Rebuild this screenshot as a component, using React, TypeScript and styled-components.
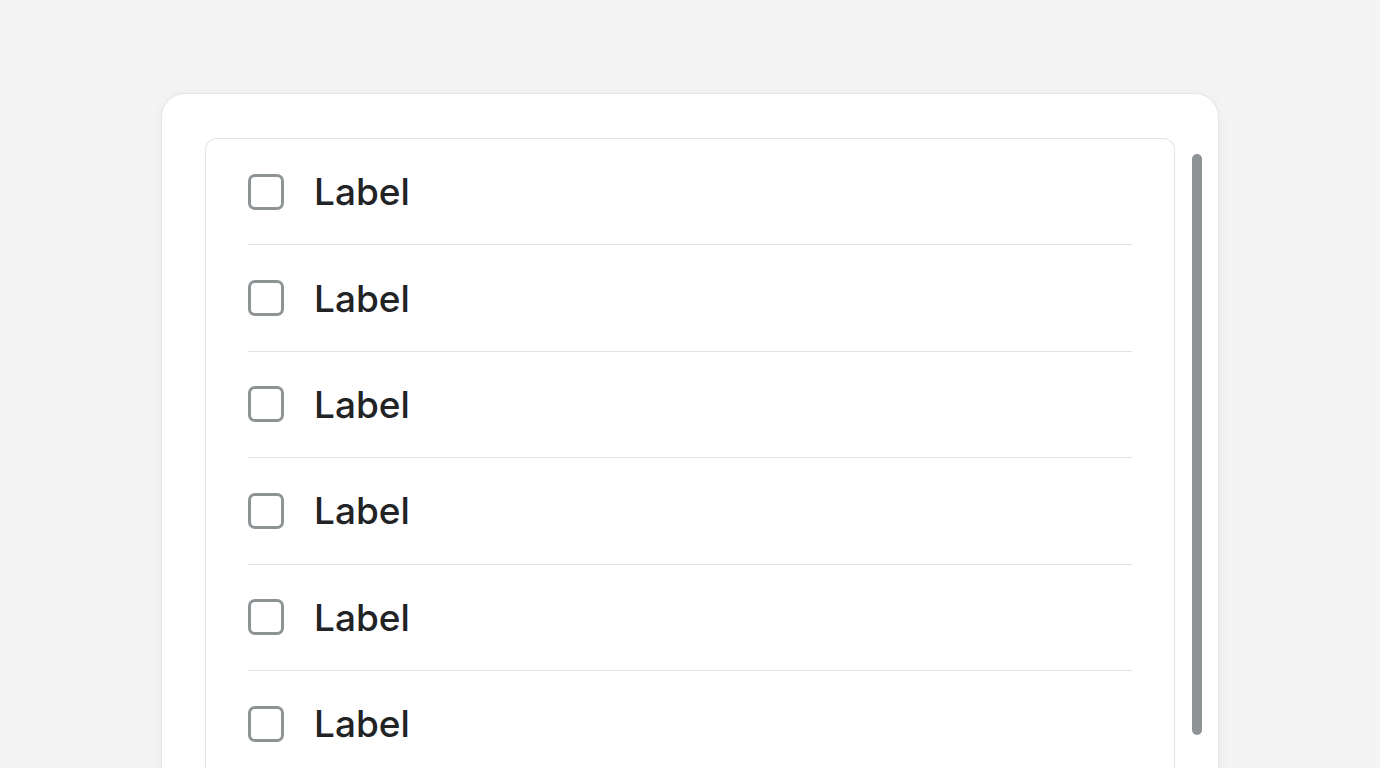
import * as React from "react";
import styled, { createGlobalStyle } from "styled-components";

const Global = createGlobalStyle`
  html, body {
    margin: 0;
    padding: 0;
    background: #f4f4f4;
    height: 768px;
    overflow: hidden;
    font-family: Inter, "Noto Sans", sans-serif;
  }
`;

const Page = styled.div`
  display: flex;
  justify-content: center;
  padding-top: 93px;
`;

const Card = styled.div`
  width: 1058px;
  height: 700px;
  box-sizing: border-box;
  background: #fff;
  border: 1px solid #e6e6e6;
  border-radius: 24px;
  box-shadow: 0 2px 12px rgba(0, 0, 0, 0.05);
  padding: 44px 16px 0 43px;
  display: flex;
  align-items: flex-start;
`;

const ListBox = styled.div`
  flex: 1;
  height: 660px;
  border: 1px solid #e3e3e3;
  border-bottom: none;
  border-radius: 12px 12px 0 0;
  padding: 0 42px;
`;

const Row = styled.label`
  display: flex;
  align-items: center;
  gap: 30px;
  height: 105.4px;
  border-bottom: 1px solid #e2e2e2;

  &:last-child {
    border-bottom: none;
  }
`;

const Box = styled.span`
  width: 36px;
  height: 36px;
  box-sizing: border-box;
  border: 3px solid #8e9396;
  border-radius: 7px;
  flex-shrink: 0;
`;

const Text = styled.span`
  font-size: 37px;
  font-weight: 450;
  color: #222325;
  letter-spacing: 0;
`;

const Track = styled.div`
  width: 10px;
  margin-left: 17px;
  padding-top: 16px;
`;

const Thumb = styled.div`
  width: 10px;
  height: 581px;
  border-radius: 5px;
  background: #8e9396;
`;

export default function App() {
  const rows = Array.from({ length: 6 });
  return (
    <>
      <Global />
      <Page>
        <Card>
          <ListBox>
            {rows.map((_, i) => (
              <Row key={i}>
                <Box />
                <Text>Label</Text>
              </Row>
            ))}
          </ListBox>
          <Track>
            <Thumb />
          </Track>
        </Card>
      </Page>
    </>
  );
}
